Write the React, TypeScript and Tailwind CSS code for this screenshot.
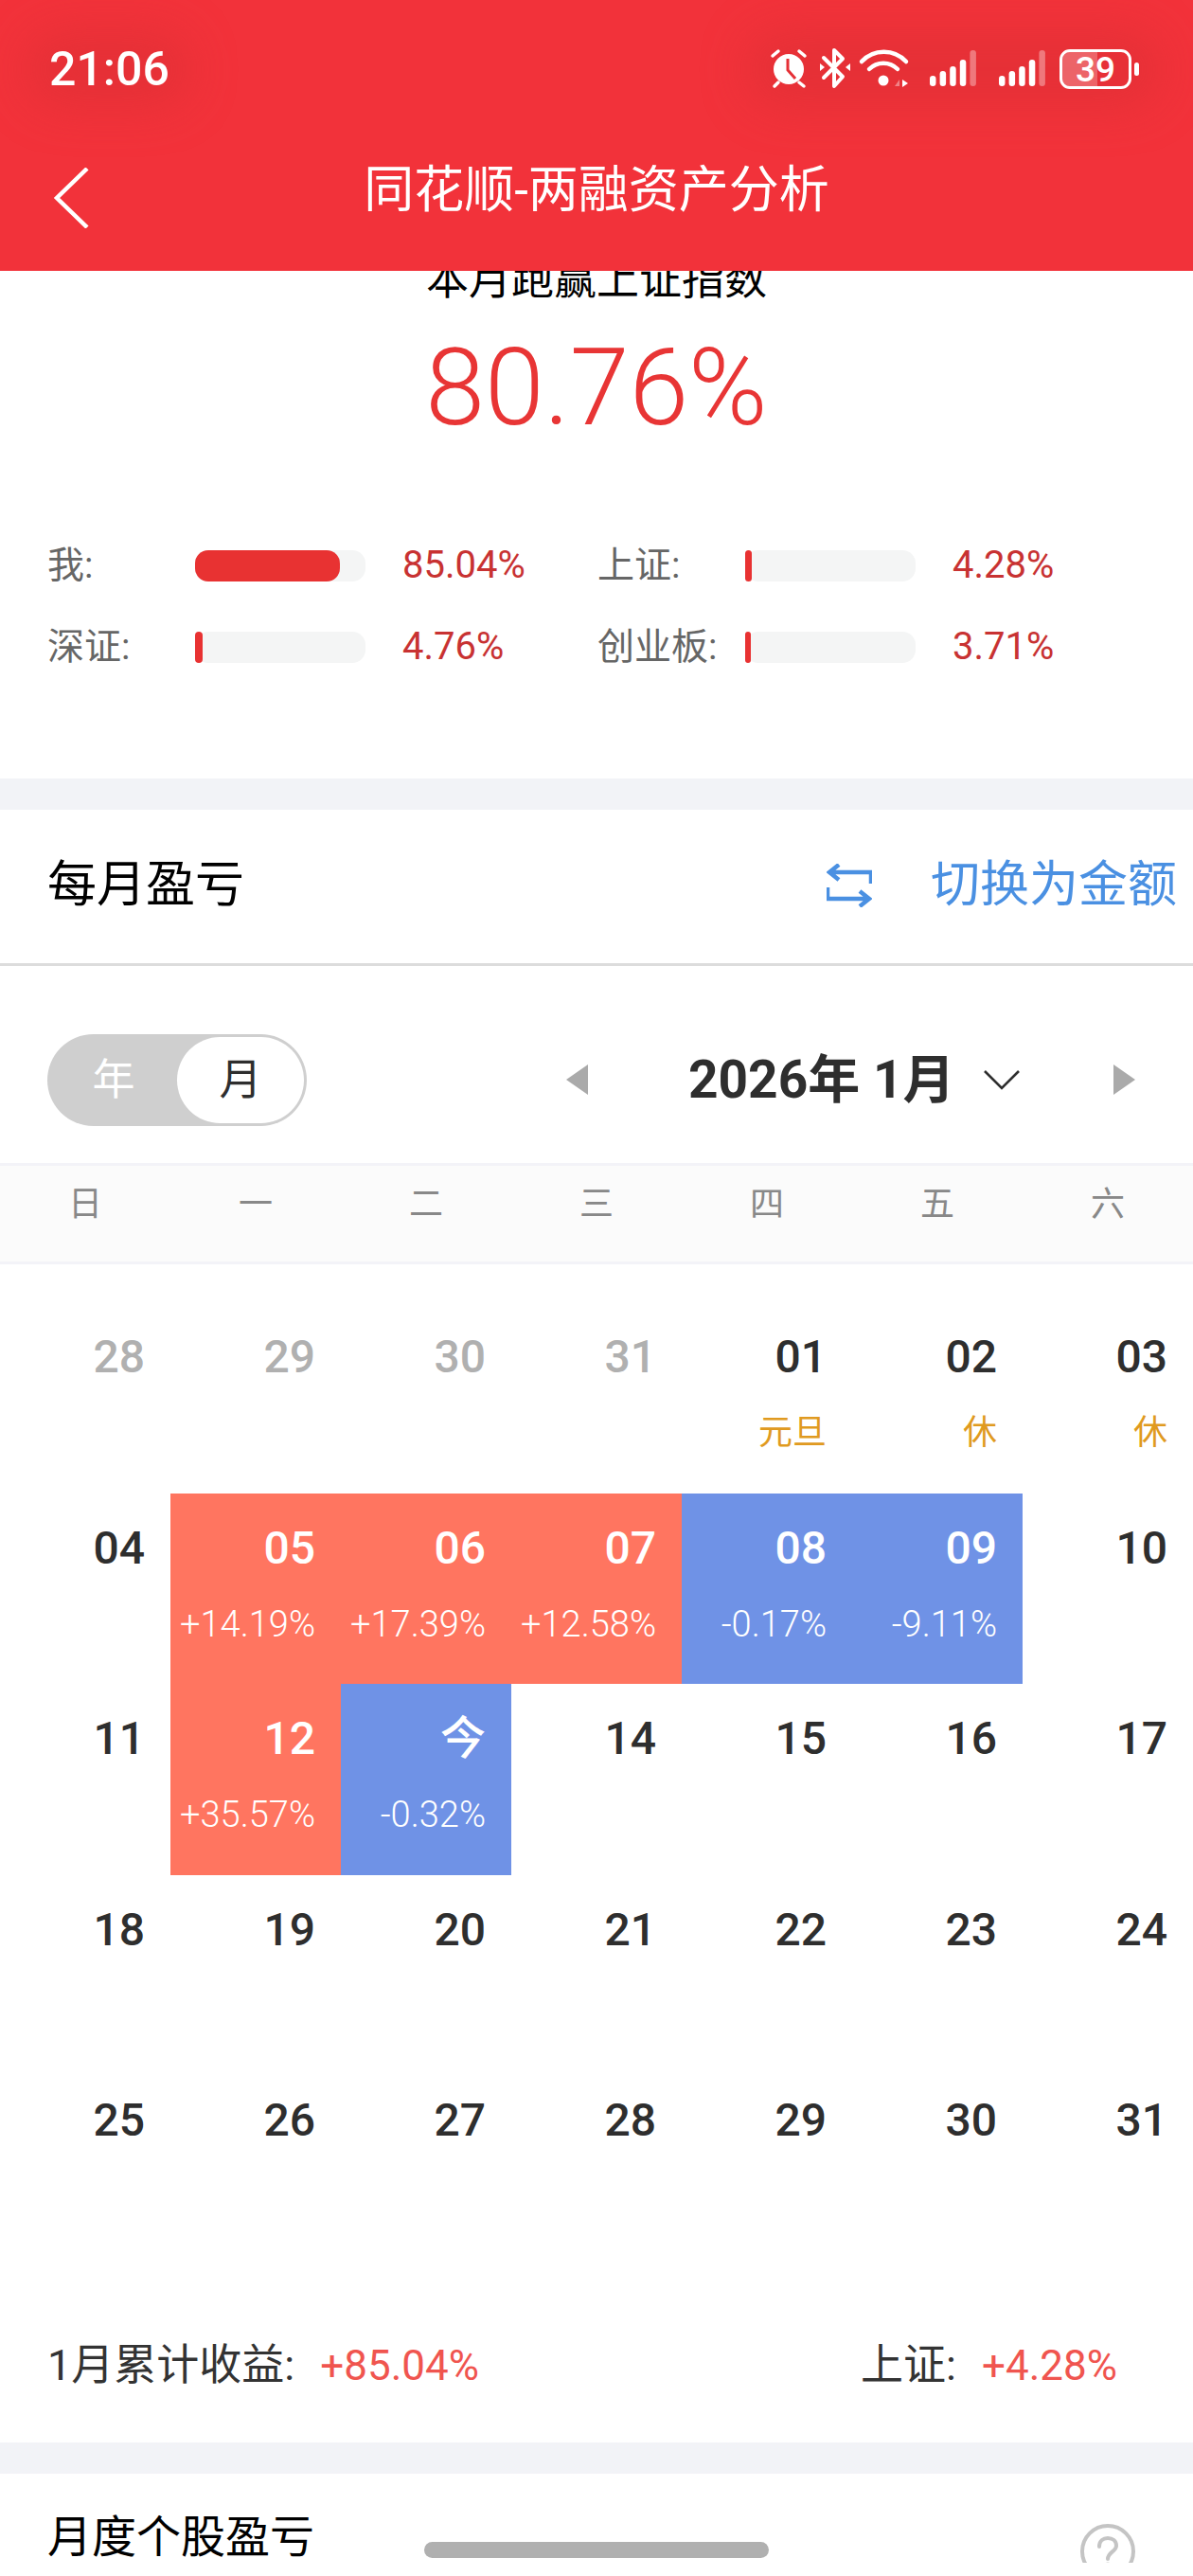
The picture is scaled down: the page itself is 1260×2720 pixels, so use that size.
type Cell = {
  d: string;
  sub?: string;
  kind?: "muted" | "up" | "down" | "holiday";
};

const rows: Cell[][] = [
  [
    { d: "28", kind: "muted" },
    { d: "29", kind: "muted" },
    { d: "30", kind: "muted" },
    { d: "31", kind: "muted" },
    { d: "01", sub: "元旦", kind: "holiday" },
    { d: "02", sub: "休", kind: "holiday" },
    { d: "03", sub: "休", kind: "holiday" },
  ],
  [
    { d: "04" },
    { d: "05", sub: "+14.19%", kind: "up" },
    { d: "06", sub: "+17.39%", kind: "up" },
    { d: "07", sub: "+12.58%", kind: "up" },
    { d: "08", sub: "-0.17%", kind: "down" },
    { d: "09", sub: "-9.11%", kind: "down" },
    { d: "10" },
  ],
  [
    { d: "11" },
    { d: "12", sub: "+35.57%", kind: "up" },
    { d: "今", sub: "-0.32%", kind: "down" },
    { d: "14" },
    { d: "15" },
    { d: "16" },
    { d: "17" },
  ],
  ["18", "19", "20", "21", "22", "23", "24"].map((d) => ({ d })),
  ["25", "26", "27", "28", "29", "30", "31"].map((d) => ({ d })),
];

const stats = [
  [
    { label: "我:", value: "85.04%", width: 153 },
    { label: "上证:", value: "4.28%", width: 7 },
  ],
  [
    { label: "深证:", value: "4.76%", width: 8 },
    { label: "创业板:", value: "3.71%", width: 6 },
  ],
];

function Signal({ x }: { x: number }) {
  const bars = [11, 16, 21, 28];
  return (
    <g fill="#fff">
      {bars.map((h, i) => (
        <rect key={i} x={x + i * 10.6} y={43 - h} width="6.5" height={h} rx="3.2" />
      ))}
      <rect x={x + 42.4} y="5" width="6.5" height="38" rx="3.2" opacity="0.35" />
    </g>
  );
}

function StatusIcons() {
  return (
    <svg width="310" height="50" viewBox="0 0 310 50" fill="none">
      <circle cx="25" cy="25" r="16" fill="#fff" />
      <path d="M24 14v12l8 9" stroke="#e53036" strokeWidth="3" />
      <path
        d="M8 11l6-5M36 6l6 5M14 39l-4 4M36 39l5 4"
        stroke="#fff"
        strokeWidth="3.5"
        strokeLinecap="round"
      />
      <path
        d="M62 13l20 20-9 10V5l9 9-20 20"
        stroke="#fff"
        strokeWidth="4"
        strokeLinejoin="round"
        strokeLinecap="round"
      />
      <path d="M58 19l5 4-5 4zM90 19l-5 4 5 4z" fill="#fff" />
      <path
        d="M102 17a32 32 0 0 1 47 0M110 25a21 21 0 0 1 30 0"
        stroke="#fff"
        strokeWidth="4.5"
        strokeLinecap="round"
      />
      <circle cx="125" cy="37" r="5.5" fill="#fff" />
      <path d="M137 43l5-7v7z" fill="#fff" opacity="0.4" />
      <path d="M145 36l6 4-6 4z" fill="#fff" />
      <Signal x={174} />
      <Signal x={247} />
    </svg>
  );
}

function Battery() {
  return (
    <div className="flex items-center gap-[3px]">
      <div className="relative flex h-[42px] w-[76px] items-center justify-center overflow-hidden rounded-[11px] border-[3px] border-white">
        <div className="absolute inset-y-0 left-0 w-[37px] bg-white/25" />
        <span className="relative text-[37px] leading-none font-medium text-white">39</span>
      </div>
      <div className="h-[14px] w-[5px] rounded-full bg-white" />
    </div>
  );
}

function Stat({ label, value, width }: { label: string; value: string; width: number }) {
  return (
    <div className="flex items-center">
      <span className="w-[156px] text-[39px] leading-none text-[#666]">{label}</span>
      <div className="h-[33px] w-[180px] rounded-[14px] bg-[#f4f5f5]">
        <div className="h-full rounded-[14px] bg-[#e83232]" style={{ width }} />
      </div>
      <span className="ml-[39px] text-[40px] leading-none text-[#c83232]">{value}</span>
    </div>
  );
}

function DayCell({ d, sub, kind }: Cell) {
  const bg = kind === "up" ? "bg-[#ff7560]" : kind === "down" ? "bg-[#6f92e6]" : "";
  const dateColor =
    kind === "muted"
      ? "text-[#b0b0b0]"
      : kind === "up" || kind === "down"
        ? "text-white"
        : "text-[#2e2e2e]";
  return (
    <div className={`flex flex-col items-end pt-[28px] pr-[27px] ${bg}`}>
      <span className={`text-[48px] leading-[60px] font-medium ${dateColor}`}>{d}</span>
      {sub && (
        <span
          className={`mt-[25px] leading-[50px] ${
            kind === "holiday"
              ? "text-[36px] text-[#e09a20]"
              : "text-[38px] font-[350] text-white"
          }`}
        >
          {sub}
        </span>
      )}
    </div>
  );
}

export default function App() {
  return (
    <div className="relative flex h-[2720px] w-[1260px] flex-col overflow-hidden bg-white font-['Roboto','Noto_Sans_CJK_SC',sans-serif]">
      <header className="relative z-10 h-[286px] shrink-0 overflow-hidden bg-[#f2323a] text-white">
        <div className="absolute top-[35px] left-[30px] h-[76px] w-[170px] rounded-full bg-[#dc2e34]/60 blur-xl" />
        <div className="absolute top-[35px] left-[790px] h-[76px] w-[435px] rounded-full bg-[#dc2e34]/60 blur-xl" />
        <div className="relative flex h-[146px] items-center justify-between pr-[57px] pl-[52px]">
          <span className="text-[50px] leading-none font-medium">21:06</span>
          <div className="flex items-center gap-px">
            <StatusIcons />
            <Battery />
          </div>
        </div>
        <div className="relative flex h-[110px] items-center justify-center">
          <svg className="absolute top-[31px] left-[56px]" width="38" height="64" viewBox="0 0 38 64" fill="none" stroke="#fff" strokeWidth="4.5">
            <path d="M36 1L4 32l32 31" />
          </svg>
          <span className="text-[53px] leading-none">同花顺-两融资产分析</span>
        </div>
      </header>

      <main className="min-h-0 flex-1 overflow-hidden">
        <section className="-mt-[18px] flex h-[554px] flex-col">
          <p className="text-center text-[45px] leading-[56px] text-black">本月跑赢上证指数</p>
          <p className="mt-[26px] text-center text-[113px] leading-[120px] font-[350] text-[#e83535]">
            80.76%
          </p>
          <div className="mt-[107px] flex flex-col gap-[46px] pl-[50px]">
            {stats.map((row, i) => (
              <div key={i} className="grid grid-cols-[581px_1fr]">
                {row.map((s) => (
                  <Stat key={s.label} {...s} />
                ))}
              </div>
            ))}
          </div>
        </section>

        <div className="h-[33px] bg-[#f2f3f7]" />

        <section className="flex h-[165px] items-center justify-between border-b-[3px] border-[#dcdcdc] pr-[17px] pb-[2px] pl-[50px]">
          <h2 className="text-[52px] leading-none text-black">每月盈亏</h2>
          <div className="flex items-center gap-[62px] text-[#4a90e2]">
            <svg width="48" height="46" viewBox="0 0 48 46" fill="none" stroke="currentColor" strokeWidth="4.5">
              <path d="M47 21V9H3M13 1L3 9l10 8" />
              <path d="M1 25v12h44M35 29l10 8-10 8" />
            </svg>
            <span className="text-[52px] leading-none">切换为金额</span>
          </div>
        </section>

        <section className="flex h-[208px] items-center px-[50px] pt-[32px]">
          <div className="flex h-[97px] w-[274px] items-center rounded-full bg-[#cfcfcf] p-[3px]">
            <span className="flex-1 text-center text-[45px] leading-none text-white">年</span>
            <span className="flex h-[91px] w-[134px] items-center justify-center rounded-full bg-white text-[45px] leading-none text-[#2e2e2e]">
              月
            </span>
          </div>
          <div className="ml-[274px] h-0 w-0 border-y-[16px] border-r-[23px] border-y-transparent border-r-[#aaa]" />
          <span className="ml-[106px] text-[55px] leading-none font-bold text-[#2e2e2e]">2026年 1月</span>
          <svg className="ml-[31px]" width="38" height="21" viewBox="0 0 38 21" fill="none" stroke="#2e2e2e" strokeWidth="2.6">
            <path d="M1 1l18 18L37 1" />
          </svg>
          <div className="ml-[99px] h-0 w-0 border-y-[16px] border-l-[23px] border-y-transparent border-l-[#aaa]" />
        </section>

        <div className="grid h-[107px] grid-cols-7 border-y-[3px] border-[#f3f3f8] bg-[#fbfbfb] pt-[21px] text-center text-[36px] leading-[40px] text-[#888]">
          {["日", "一", "二", "三", "四", "五", "六"].map((w) => (
            <span key={w}>{w}</span>
          ))}
        </div>

        <div className="grid auto-rows-[201.6px] grid-cols-7 pt-[40px]">
          {rows.flat().map((c, i) => (
            <DayCell key={i} {...c} />
          ))}
        </div>

        <section className="flex h-[196px] items-center justify-between pt-[34px] pr-[80px] pl-[50px] text-[45px] leading-none text-[#333]">
          <p>
            1月累计收益:<span className="ml-[27px] text-[44px] text-[#f0554f]">+85.04%</span>
          </p>
          <p>
            上证:<span className="ml-[27px] text-[44px] text-[#f0554f]">+4.28%</span>
          </p>
        </section>

        <div className="h-[33px] bg-[#f2f3f7]" />

        <section className="flex items-start justify-between pt-[42px] pr-[61px] pl-[50px]">
          <h2 className="text-[47px] leading-[50px] text-black">月度个股盈亏</h2>
          <svg className="mt-[11px]" width="58" height="58" viewBox="0 0 58 58" fill="none" stroke="#c4c4c4" strokeWidth="4">
            <circle cx="29" cy="29" r="27" />
            <path d="M20 24c0-6 4-9 9-9s9 3 9 8c0 6-9 7-9 14" strokeLinecap="round" />
            <circle cx="29" cy="44" r="1.5" />
          </svg>
        </section>
      </main>

      <div className="absolute inset-x-0 bottom-0 h-[14px] bg-white" />
      <div className="absolute bottom-[19px] left-[448px] h-[17px] w-[364px] rounded-full bg-[#b0b0b0]" />
    </div>
  );
}
